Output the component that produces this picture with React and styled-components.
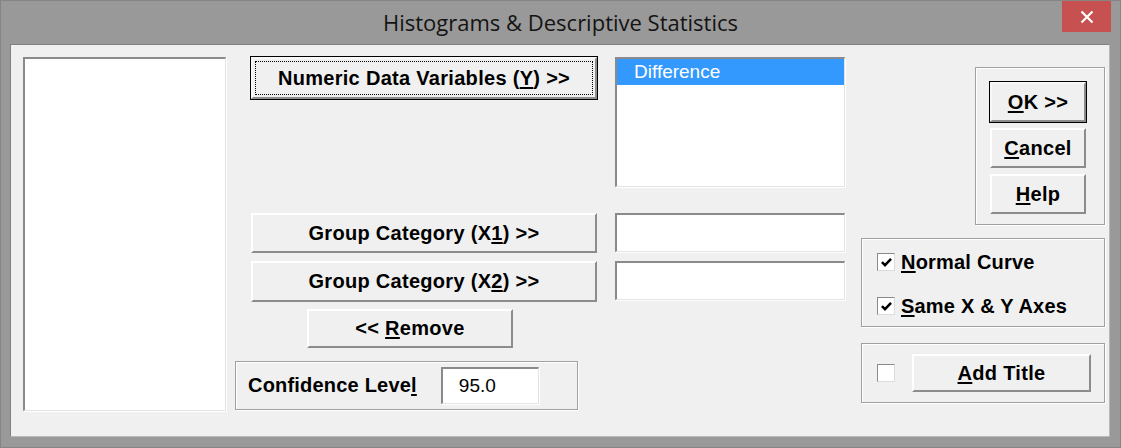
import React from 'react'
import styled, { createGlobalStyle, css } from 'styled-components'

const GlobalStyle = createGlobalStyle`
  html, body {
    margin: 0;
    padding: 0;
    background: #999999;
  }
  body {
    font-family: "Liberation Sans", Arial, sans-serif;
  }
`

const Window = styled.div`
  width: 1121px;
  height: 448px;
  box-sizing: border-box;
  background: #999999;
  border: 1px solid #858585;
  display: flex;
  flex-direction: column;
`

const TitleBar = styled.div`
  height: 43px;
  position: relative;
  display: flex;
  align-items: center;
  justify-content: center;
`

const Title = styled.div`
  font-family: "Open Sans", "Noto Sans", sans-serif;
  font-size: 22px;
  color: #141414;
  margin-top: -1px;
`

const CloseButton = styled.div`
  position: absolute;
  top: 0;
  right: 9px;
  width: 49px;
  height: 31px;
  background: #c75050;
  display: flex;
  align-items: center;
  justify-content: center;
`

const Content = styled.div`
  margin: 0 10px 10px 9px;
  flex: 1;
  box-sizing: border-box;
  background: #f0f0f0;
  border-top: 1px solid #808080;
  border-left: 1px solid #808080;
  border-right: 1px solid #b8b8b8;
  border-bottom: 1px solid #b8b8b8;
  padding: 12px 0 0 12px;
  display: flex;
  align-items: flex-start;
`

const sunken = css`
  box-sizing: border-box;
  background: #ffffff;
  border-top: 2px solid #8a8a8a;
  border-left: 2px solid #8a8a8a;
  border-right: 1px solid #e3e3e3;
  border-bottom: 1px solid #e3e3e3;
  box-shadow: 1px 1px 0 #ffffff;
`

const ListBox = styled.div`
  ${sunken};
  width: ${p => p.$w}px;
  height: ${p => p.$h}px;
  margin-left: ${p => p.$ml || 0}px;
`

const ListItem = styled.div`
  height: 26px;
  background: #3399ff;
  color: #ffffff;
  font-size: 19px;
  line-height: 26px;
  padding-left: 17px;
`

const TextBox = styled.div`
  ${sunken};
  width: ${p => p.$w}px;
  height: ${p => p.$h}px;
  margin-left: ${p => p.$ml || 0}px;
  font-size: 19px;
  color: #000;
  padding-left: 16px;
  display: flex;
  align-items: center;
`

const Button = styled.div`
  box-sizing: border-box;
  width: ${p => p.$w}px;
  height: ${p => p.$h}px;
  margin-left: ${p => p.$ml || 0}px;
  background: #f0f0f0;
  border-top: 2px solid #ffffff;
  border-left: 2px solid #ffffff;
  border-right: 2px solid #8c8c8c;
  border-bottom: 2px solid #8c8c8c;
  ${p => p.$default && css`
    outline: 1px solid #000000;
    outline-offset: 0;
    border-top-color: #f8f8f8;
    border-left-color: #f8f8f8;
  `}
  display: flex;
  align-items: center;
  justify-content: center;
  font-weight: bold;
  font-size: 20px;
  letter-spacing: 0.3px;
  color: #000;
  position: relative;
  white-space: pre;
  u { text-decoration-thickness: 2px; text-underline-offset: 2px; }
`

const FocusRing = styled.div`
  position: absolute;
  inset: 2px;
  border: 1px dotted #000;
  pointer-events: none;
`

const Middle = styled.div`
  margin-left: 9px;
  width: 610px;
  display: flex;
  flex-direction: column;
`

const Row = styled.div`
  display: flex;
  align-items: flex-start;
  margin-top: ${p => p.$mt || 0}px;
`

const GroupBox = styled.div`
  box-sizing: border-box;
  width: ${p => p.$w}px;
  height: ${p => p.$h}px;
  margin-top: ${p => p.$mt || 0}px;
  border: 1px solid #a0a0a0;
  box-shadow: 1px 1px 0 #ffffff, inset 1px 1px 0 #ffffff;
  align-self: ${p => p.$end ? 'flex-end' : 'auto'};
`

const ConfGroup = styled(GroupBox)`
  display: flex;
  align-items: center;
  padding-left: 12px;
`

const Label = styled.span`
  font-weight: bold;
  font-size: 20px;
  letter-spacing: 0.2px;
  color: #000;
  u { text-decoration-thickness: 2px; text-underline-offset: 2px; }
`

const RightCol = styled.div`
  margin-left: 16px;
  margin-top: 10px;
  width: 244px;
  display: flex;
  flex-direction: column;
`

const ButtonStack = styled(GroupBox)`
  padding: 14px 0 0 14px;
  display: flex;
  flex-direction: column;
  gap: 6px;
`

const CheckGroup = styled(GroupBox)`
  padding: 14px 0 0 15px;
  display: flex;
  flex-direction: column;
  gap: 26px;
`

const CheckRow = styled.div`
  display: flex;
  align-items: center;
  height: 18px;
`

const Box = styled.div`
  box-sizing: border-box;
  width: 18px;
  height: 18px;
  background: #fff;
  border-top: 1px solid #8a8a8a;
  border-left: 1px solid #8a8a8a;
  border-right: 1px solid #dcdcdc;
  border-bottom: 1px solid #dcdcdc;
  display: flex;
  align-items: center;
  justify-content: center;
  margin-right: 6px;
`

const TitleGroup = styled(GroupBox)`
  display: flex;
  align-items: center;
  padding-left: 15px;
`

const Check = ({ checked }) => (
  <Box>
    {checked && (
      <svg width="13" height="13" viewBox="0 0 12 12">
        <path d="M1.8 5.6 L4.6 8.4 L10.2 2.6" fill="none" stroke="#000" strokeWidth="2.3" />
      </svg>
    )}
  </Box>
)

export default function App() {
  return (
    <>
      <GlobalStyle />
      <Window>
        <TitleBar>
          <Title>Histograms &amp; Descriptive Statistics</Title>
          <CloseButton>
            <svg width="14" height="14" viewBox="0 0 14 14">
              <path d="M1.5 1.5 L12.5 12.5 M12.5 1.5 L1.5 12.5" stroke="#fff" strokeWidth="2.2" />
            </svg>
          </CloseButton>
        </TitleBar>
        <Content>
          <ListBox $w={203} $h={354} />
          <Middle>
            <Row>
              <Button $w={346} $h={42} $ml={16} $default>
                <FocusRing />
                <span>Numeric Data Variables (<u>Y</u>) &gt;&gt;</span>
              </Button>
              <ListBox $w={230} $h={130} $ml={18}>
                <ListItem>Difference</ListItem>
              </ListBox>
            </Row>
            <Row $mt={26}>
              <Button $w={346} $h={40} $ml={16}><span>Group Category (X<u>1</u>) &gt;&gt;</span></Button>
              <TextBox $w={230} $h={39} $ml={18} />
            </Row>
            <Row $mt={8}>
              <Button $w={346} $h={41} $ml={16}><span>Group Category (X<u>2</u>) &gt;&gt;</span></Button>
              <TextBox $w={230} $h={39} $ml={18} />
            </Row>
            <Row $mt={7}>
              <Button $w={206} $h={39} $ml={72}><span>&lt;&lt; <u>R</u>emove</span></Button>
            </Row>
            <ConfGroup $w={343} $h={49} $mt={13}>
              <Label>Confidence Leve<u>l</u></Label>
              <TextBox $w={98} $h={37} $ml={24}>95.0</TextBox>
            </ConfGroup>
          </Middle>
          <RightCol>
            <ButtonStack $w={130} $h={158} $end>
              <Button $w={96} $h={40} $default><span><u>O</u>K &gt;&gt;</span></Button>
              <Button $w={96} $h={40}><span><u>C</u>ancel</span></Button>
              <Button $w={96} $h={40}><span><u>H</u>elp</span></Button>
            </ButtonStack>
            <CheckGroup $w={244} $h={89} $mt={13}>
              <CheckRow>
                <Check checked />
                <Label><u>N</u>ormal Curve</Label>
              </CheckRow>
              <CheckRow>
                <Check checked />
                <Label><u>S</u>ame X &amp; Y Axes</Label>
              </CheckRow>
            </CheckGroup>
            <TitleGroup $w={244} $h={60} $mt={16}>
              <Check />
              <Button $w={179} $h={38} $ml={11}><span><u>A</u>dd Title</span></Button>
            </TitleGroup>
          </RightCol>
        </Content>
      </Window>
    </>
  )
}
